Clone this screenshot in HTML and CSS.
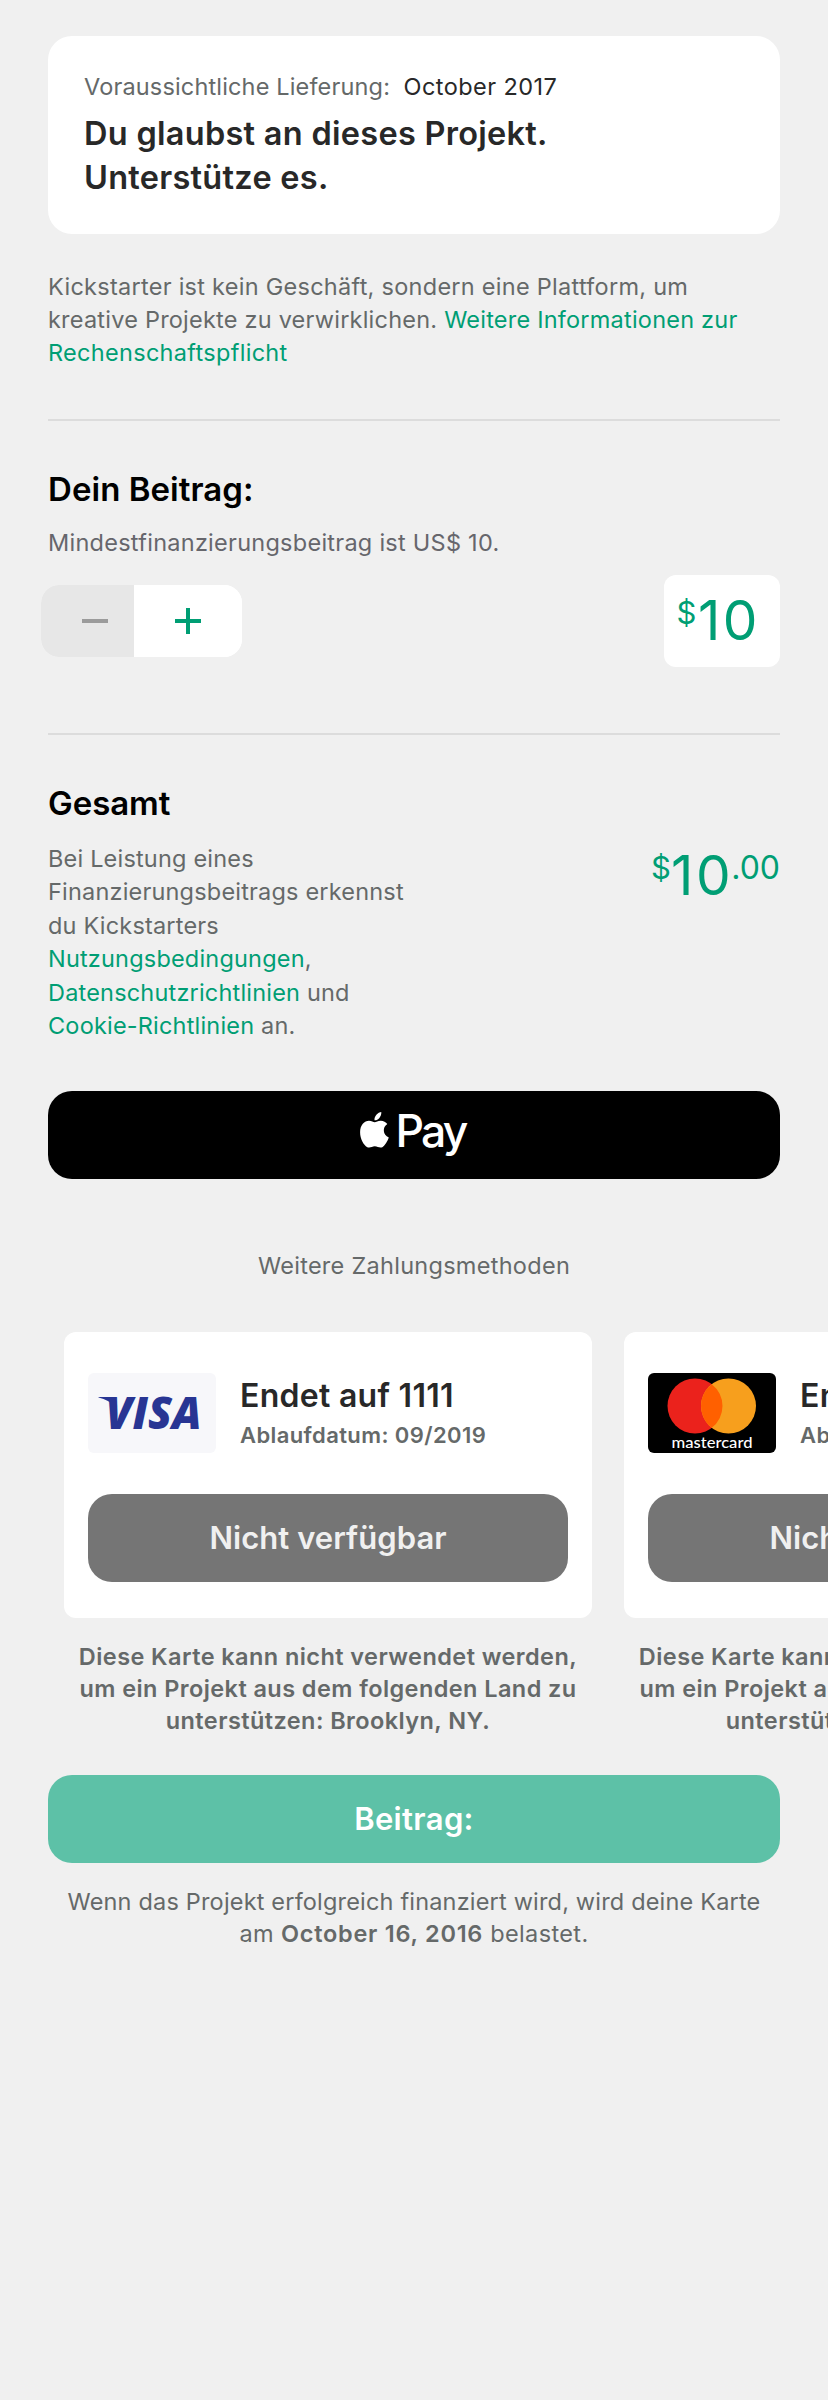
FILE: index.html
```html
<!DOCTYPE html>
<html lang="de">
<head>
<meta charset="utf-8">
<title>Beitrag</title>
<link rel="stylesheet" href="styles.css">
</head>
<body>
<main class="page">
  <section class="pitch">
    <p class="delivery"><span class="delivery-label">Voraussichtliche Lieferung:</span><span class="delivery-date">October 2017</span></p>
    <h1 class="pitch-title">Du glaubst an dieses Projekt.<br>Unterstütze es.</h1>
  </section>

  <p class="disclaimer"><span class="line-a">Kickstarter ist kein Geschäft, sondern eine Plattform, um</span><br>kreative Projekte zu verwirklichen. <a>Weitere Informationen zur<br><span class="line-c">Rechenschaftspflicht</span></a></p>

  <section class="block">
    <h2 class="heading">Dein Beitrag:</h2>
    <p class="minimum">Mindestfinanzierungsbeitrag ist US$ 10.</p>
    <div class="amount-row">
      <div class="stepper">
        <button class="step step-minus" aria-label="Weniger"><svg width="28" height="28" viewBox="0 0 28 28"><path d="M1 14h26"/></svg></button>
        <button class="step step-plus" aria-label="Mehr"><svg width="28" height="28" viewBox="0 0 28 28"><path d="M1 14h26M14 1v26"/></svg></button>
      </div>
      <div class="amount-box money"><span class="small currency">$</span><span class="big">10</span></div>
    </div>
  </section>

  <section class="block total">
    <h2 class="heading heading-total">Gesamt</h2>
    <div class="total-row">
      <p class="terms">Bei Leistung eines<br>Finanzierungsbeitrags erkennst<br>du Kickstarters<br><a>Nutzungsbedingungen</a>,<br><a>Datenschutzrichtlinien</a> und<br><a>Cookie-Richtlinien</a> an.</p>
      <div class="money total-money"><span class="small currency">$</span><span class="big">10</span><span class="small cents">.00</span></div>
    </div>
  </section>

  <button class="apple-pay" aria-label="Apple Pay">
    <svg class="apple" width="29" height="37" viewBox="0 0 29 37"><path d="M21.3 0c.2 2.200-.6 4.300-1.900 5.900-1.300 1.500-3.100 2.500-4.900 2.400-.3-2.100.7-4.200 1.900-5.600C17.700 1.200 19.800.1 21.300 0zM14.700 10.200c1.400 0 3.300-1.600 6.200-1.500 2.600.1 5 1.300 6.400 3.300-5.100 3.200-4.600 10.900 1.500 13.400-1.100 3.200-3.800 8.200-6.500 9.800-2.700 1.300-4.700-.9-7.500-.9s-4.800 2.200-7.500.9C3.400 33 .1 26.700.1 20.300.1 13 4.500 8.800 9 8.800c2.500 0 4.400 1.400 5.700 1.400z"/></svg>
    <span class="pay">Pay</span>
  </button>

  <p class="other">Weitere Zahlungsmethoden</p>

  <section class="cards">
    <article class="card-item">
      <div class="card">
        <div class="card-head">
          <svg class="brand" width="128" height="80" viewBox="0 0 128 80">
            <rect width="128" height="80" rx="6" fill="#f7f7fa"/>
            <path d="M10.500 24H25l3 10q-7-7-17.500-9.500z" fill="#283593"/>
            <text class="visa" x="17.500" y="56" textLength="96" lengthAdjust="spacingAndGlyphs">VISA</text>
          </svg>
          <div class="card-text"><h3 class="card-title">Endet auf 1111</h3><p class="expiry">Ablaufdatum: 09/2019</p></div>
        </div>
        <button class="unavailable">Nicht verfügbar</button>
      </div>
      <p class="card-note">Diese Karte kann nicht verwendet werden,<br>um ein Projekt aus dem folgenden Land zu<br>unterstützen: Brooklyn, NY.</p>
    </article>
    <article class="card-item">
      <div class="card">
        <div class="card-head">
          <svg class="brand" width="128" height="80" viewBox="0 0 128 80">
            <rect width="128" height="80" rx="6"/>
            <circle cx="47" cy="33" r="27.500" fill="#eb221c"/>
            <circle cx="80.500" cy="33" r="27.500" fill="#f79f1d"/>
            <path d="M63.750 11.200a27.500 27.500 0 0 1 0 43.600 27.500 27.500 0 0 1 0-43.600z" fill="#ff6000"/>
            <text class="mastercard" x="23.500" y="74.500" textLength="81" lengthAdjust="spacingAndGlyphs">mastercard</text>
          </svg>
          <div class="card-text"><h3 class="card-title">Endet auf 1111</h3><p class="expiry">Ablaufdatum: 09/2019</p></div>
        </div>
        <button class="unavailable">Nicht verfügbar</button>
      </div>
      <p class="card-note">Diese Karte kann nicht verwendet werden,<br>um ein Projekt aus dem folgenden Land zu<br>unterstützen: Brooklyn, NY.</p>
    </article>
  </section>

  <button class="pledge">Beitrag:</button>
  <p class="footer-note">Wenn das Projekt erfolgreich finanziert wird, wird deine Karte<br><span class="line-b">am <b>October 16, 2016</b> belastet.</span></p>
</main>
</body>
</html>
```
FILE: styles.css
```css
* { box-sizing: border-box; }
body, h1, h2, h3, p { margin: 0; }
body {
  background: #f0f0f0;
  font-family: Inter, "Liberation Sans", sans-serif;
  font-size: 23.5px;
  color: #656969;
  overflow-x: hidden;
}
button { border: 0; padding: 0; font: inherit; display: block; }
a { color: #009e74; }
.page { height: 2400px; padding: 36px 48px 0; overflow: hidden; white-space: nowrap; }

.pitch { height: 198px; padding: 36px 36px 0; background: #fff; border-radius: 24px; }
.delivery { display: flex; gap: 13.5px; line-height: 30px; letter-spacing: .16px; }
.delivery-date { color: #282828; letter-spacing: .42px; }
.pitch-title { margin: 10px 0 0; font-size: 32.5px; font-weight: 600; line-height: 44px; letter-spacing: .28px; color: #282828; }

.disclaimer { margin: 36px 0 50px; line-height: 33px; letter-spacing: .22px; }
.line-a { letter-spacing: .27px; }
.line-c { letter-spacing: .3px; }

.block { border-top: 2px solid #dcdcdc; padding-top: 48px; }
.heading { font-size: 33px; font-weight: 600; line-height: 40px; letter-spacing: .05px; color: #000; }
.heading-total { letter-spacing: -.05px; }
.minimum { margin-top: 19px; line-height: 30px; letter-spacing: .26px; color: #66666c; }
.amount-row { display: flex; justify-content: space-between; align-items: center; margin-top: 17px; height: 92px; }
.stepper { display: flex; width: 201px; height: 72px; margin-left: -7px; border-radius: 18px; overflow: hidden; background: #fff; }
.step { display: flex; align-items: center; height: 72px; background: #fff; fill: none; stroke-width: 4; }
.step-minus { width: 93px; padding-left: 40px; background: #e7e7e7; stroke: #9b9b9b; }
.step-plus { width: 108px; padding-left: 40px; stroke: #009e74; }

.money { display: flex; align-items: flex-start; color: #009e74; }
.small { font-size: 32px; line-height: 40px; margin-top: 6px; }
.currency { font-size: 31px; }
.big { font-size: 55px; line-height: 66px; letter-spacing: 2.6px; }
.total-money .big { margin-right: -2px; }
.amount-box { width: 116px; height: 92px; padding: 12px 0 0 12.5px; background: #fff; border-radius: 12px; }
.amount-box .big { margin-left: 1.5px; }

.total { margin-top: 66px; }
.total-row { display: flex; justify-content: space-between; height: 200px; margin-top: 19px; }
.terms { line-height: 33.400px; letter-spacing: .19px; }

.apple-pay { display: flex; justify-content: center; width: 732px; height: 88px; margin-top: 49px; padding-right: 2px; background: #000; border-radius: 24px; color: #fff; }
.apple { fill: #fff; margin: 21px 6px 0 0; }
.pay { font-size: 44.5px; font-weight: 500; line-height: 54px; margin-top: 13px; letter-spacing: -2.800px; }
.other { margin-top: 72px; line-height: 30px; text-align: center; letter-spacing: .28px; }

.cards { display: flex; gap: 32px; margin: 51px 0 0 16px; }
.card-item { flex: 0 0 528px; }
.card { height: 286px; padding: 41px 24px 0; background: #fff; border-radius: 12px; }
.card-head { display: flex; gap: 24px; height: 80px; }
.brand { flex: none; }
.visa { font: italic 800 44.500px "Open Sans", sans-serif; fill: #283593; }
.mastercard { font: 500 15.500px Lato, sans-serif; fill: #fff; }
.card-title { margin-top: 3px; font-size: 32px; font-weight: 600; line-height: 40px; letter-spacing: .29px; color: #282828; }
.expiry { margin-top: 4px; font-size: 22px; font-weight: 600; line-height: 30px; letter-spacing: .4px; }
.unavailable { width: 480px; height: 88px; margin-top: 41px; padding-bottom: 2px; border-radius: 24px; background: #757575; color: #f0f0f0; font-size: 31px; font-weight: 600; letter-spacing: .05px; }
.card-note { margin-top: 23px; font-weight: 600; line-height: 32px; letter-spacing: .42px; text-align: center; }

.pledge { width: 732px; height: 88px; margin-top: 38px; padding-bottom: 2px; border-radius: 24px; background: #5dc1a7; color: #fff; font-size: 31px; font-weight: 600; letter-spacing: .35px; }
.footer-note { margin-top: 22.500px; line-height: 32px; letter-spacing: .18px; text-align: center; }
.line-b { letter-spacing: .38px; }
.line-b b { font-weight: 600; letter-spacing: .75px; }
```
